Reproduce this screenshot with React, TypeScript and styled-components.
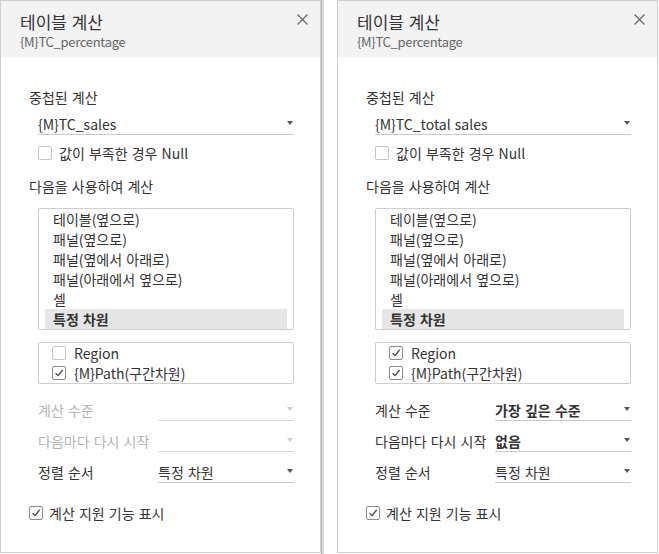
import React from 'react';
import styled, { createGlobalStyle } from 'styled-components';

const GlobalStyle = createGlobalStyle`
  html, body {
    margin: 0;
    padding: 0;
    background: #fff;
  }
  body {
    font-family: "Noto Sans CJK KR", "Noto Sans", sans-serif;
    color: #333;
    font-size: 14px;
    word-spacing: 1px;
  }
`;

const Page = styled.div`
  display: flex;
  width: 659px;
  height: 554px;
  overflow: hidden;
  background: #fff;
`;

const Strip = styled.div`
  width: 3px;
  height: 554px;
  flex-shrink: 0;
  background: linear-gradient(to right, #bdbdbd 0, #bdbdbd 1px, #d8d8d8 1px);
  margin-right: 13px;
`;

const Panel = styled.section`
  width: 321px;
  height: 553px;
  box-sizing: border-box;
  border: 1px solid #cfcfcf;
  flex-shrink: 0;
  display: flex;
  flex-direction: column;
  background: #fff;
`;

const Header = styled.header`
  height: 56px;
  box-sizing: border-box;
  background: #f3f3f3;
  padding: 10px 12px 0 19px;
  display: flex;
  justify-content: space-between;
  align-items: flex-start;
`;

const Title = styled.div`
  font-size: 17px;
  line-height: 22px;
  color: #333;
`;

const Subtitle = styled.div`
  font-size: 13px;
  line-height: 18px;
  letter-spacing: -0.3px;
  color: #666;
`;

const CloseButton = styled.button`
  border: 0;
  padding: 0;
  margin-top: 3px;
  background: none;
  width: 11px;
  height: 11px;
  display: flex;
  cursor: pointer;
`;

const Body = styled.div`
  padding: 31px 26px 0 28px;
  display: flex;
  flex-direction: column;
`;

const Label = styled.div<{ $top?: number; $disabled?: boolean }>`
  line-height: 18px;
  margin-top: ${(p) => p.$top ?? 0}px;
  color: ${(p) => (p.$disabled ? '#b4b4b4' : '#333')};
  white-space: nowrap;
`;

const Indent = styled.div<{ $top?: number; $flush?: boolean }>`
  margin-left: ${(p) => (p.$flush ? 0 : 9)}px;
  margin-top: ${(p) => p.$top ?? 0}px;
`;

const Select = styled.div<{ $disabled?: boolean; $bold?: boolean }>`
  flex: 1;
  height: 21px;
  box-sizing: border-box;
  border-bottom: 1px solid ${(p) => (p.$disabled ? '#dcdcdc' : '#c8c8c8')};
  line-height: 20px;
  font-weight: ${(p) => (p.$bold ? 700 : 400)};
  color: #333;
  display: flex;
  align-items: center;
  justify-content: space-between;
  padding-right: 1px;
`;

const Arrow = styled.span<{ $disabled?: boolean }>`
  width: 0;
  height: 0;
  border-left: 3.5px solid transparent;
  border-right: 3.5px solid transparent;
  border-top: 4px solid ${(p) => (p.$disabled ? '#cfcfcf' : '#555')};
  margin-top: -3px;
`;

const CheckRow = styled.label<{ $gap?: number }>`
  display: flex;
  align-items: center;
  height: 18px;
  gap: ${(p) => p.$gap ?? 6}px;
  white-space: nowrap;
  color: #333;
`;

const Box = styled.span<{ $checked?: boolean }>`
  width: 14px;
  height: 14px;
  box-sizing: border-box;
  border: 1px solid ${(p) => (p.$checked ? '#8c8c8c' : '#c6c6c6')};
  border-radius: 2px;
  background: #fff;
  display: flex;
  align-items: center;
  justify-content: center;
  flex-shrink: 0;
`;

const ListBox = styled.div`
  height: 122px;
  box-sizing: border-box;
  border: 1px solid #cfcfcf;
  border-radius: 2px;
  display: flex;
  flex-direction: column;
`;

const ListItem = styled.div<{ $selected?: boolean }>`
  height: 20px;
  line-height: 20px;
  margin: 0 6px;
  padding-left: 8px;
  background: ${(p) => (p.$selected ? '#e6e6e6' : 'transparent')};
  font-weight: ${(p) => (p.$selected ? 700 : 400)};
  white-space: nowrap;
`;

const DimBox = styled.div`
  height: 42px;
  box-sizing: border-box;
  border: 1px solid #cfcfcf;
  border-radius: 2px;
  display: flex;
  flex-direction: column;
`;

const DimItem = styled.div`
  height: 20px;
  display: flex;
  align-items: center;
  padding-left: 13px;
`;

const CalcRow = styled.div<{ $top: number }>`
  display: flex;
  align-items: flex-end;
  margin-top: ${(p) => p.$top}px;
`;

const CalcLabel = styled(Label)`
  width: 120px;
  flex-shrink: 0;
  line-height: 20px;
  height: 21px;
`;

function CloseIcon() {
  return (
    <svg width="11" height="11" viewBox="0 0 11 11">
      <path d="M0.5 0.5 L10.5 10.5 M10.5 0.5 L0.5 10.5" stroke="#666" strokeWidth="1.2" />
    </svg>
  );
}

function Check({ checked }: { checked?: boolean }) {
  return (
    <Box $checked={checked}>
      {checked && (
        <svg width="10" height="10" viewBox="0 0 10 10">
          <path d="M1.6 5.2 L4 7.6 L8.6 2" fill="none" stroke="#444" strokeWidth="1.3" />
        </svg>
      )}
    </Box>
  );
}

interface Option {
  label: string;
  value?: string;
  bold?: boolean;
  disabled?: boolean;
}

interface CalcPanelProps {
  nested: string;
  regionChecked: boolean;
  options: Option[];
}

const listItems = [
  '테이블(옆으로)',
  '패널(옆으로)',
  '패널(옆에서 아래로)',
  '패널(아래에서 옆으로)',
  '셀',
  '특정 차원',
];

function CalcPanel({ nested, regionChecked, options }: CalcPanelProps) {
  return (
    <Panel>
      <Header>
        <div>
          <Title>테이블 계산</Title>
          <Subtitle>{'{M}TC_percentage'}</Subtitle>
        </div>
        <CloseButton>
          <CloseIcon />
        </CloseButton>
      </Header>
      <Body>
        <Label>중첩된 계산</Label>
        <Indent $top={8}>
          <Select>
            <span>{nested}</span>
            <Arrow />
          </Select>
        </Indent>
        <Indent $top={9}>
          <CheckRow $gap={7}>
            <Check />
            값이 부족한 경우 Null
          </CheckRow>
        </Indent>
        <Label $top={15}>다음을 사용하여 계산</Label>
        <Indent $top={13}>
          <ListBox>
            {listItems.map((item, i) => (
              <ListItem key={item} $selected={i === listItems.length - 1}>
                {item}
              </ListItem>
            ))}
          </ListBox>
        </Indent>
        <Indent $top={12}>
          <DimBox>
            <DimItem>
              <CheckRow $gap={8}>
                <Check checked={regionChecked} />
                Region
              </CheckRow>
            </DimItem>
            <DimItem>
              <CheckRow $gap={8}>
                <Check checked />
                {'{M}Path(구간차원)'}
              </CheckRow>
            </DimItem>
          </DimBox>
        </Indent>
        <Indent>
          {options.map((o, i) => (
            <CalcRow key={o.label} $top={i === 0 ? 16 : 10}>
              <CalcLabel $disabled={o.disabled}>{o.label}</CalcLabel>
              <Select $disabled={o.disabled} $bold={o.bold}>
                <span>{o.value ?? ''}</span>
                <Arrow $disabled={o.disabled} />
              </Select>
            </CalcRow>
          ))}
        </Indent>
        <Indent $top={21} $flush>
          <CheckRow>
            <Check checked />
            계산 지원 기능 표시
          </CheckRow>
        </Indent>
      </Body>
    </Panel>
  );
}

export default function App() {
  return (
    <>
      <GlobalStyle />
      <Page>
        <CalcPanel
          nested="{M}TC_sales"
          regionChecked={false}
          options={[
            { label: '계산 수준', disabled: true },
            { label: '다음마다 다시 시작', disabled: true },
            { label: '정렬 순서', value: '특정 차원' },
          ]}
        />
        <Strip />
        <CalcPanel
          nested="{M}TC_total sales"
          regionChecked
          options={[
            { label: '계산 수준', value: '가장 깊은 수준', bold: true },
            { label: '다음마다 다시 시작', value: '없음', bold: true },
            { label: '정렬 순서', value: '특정 차원' },
          ]}
        />
      </Page>
    </>
  );
}
